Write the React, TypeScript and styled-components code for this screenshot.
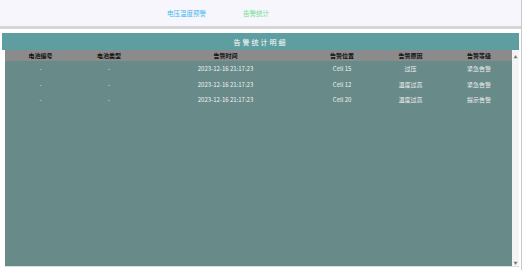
import React from "react";
import styled, { createGlobalStyle } from "styled-components";

type AlarmRow = {
  id: string;
  type: string;
  time: string;
  position: string;
  reason: string;
  level: string;
};

const GlobalStyle = createGlobalStyle`
  html, body {
    margin: 0;
    padding: 0;
    background: #fff;
    font-family: "Noto Sans CJK SC", "Noto Sans", sans-serif;
  }
`;

const Page = styled.div`
  width: 522px;
  height: 270px;
  box-sizing: border-box;
  border-right: 1px solid #c9c9c9;
  display: flex;
  flex-direction: column;
  overflow: hidden;
`;

const NavBar = styled.div`
  height: 26px;
  background: #f6f6fc;
  border-bottom: 3px solid #d6d6d6;
  display: flex;
  align-items: center;
  padding-left: 167px;
  gap: 37px;
`;

const NavItem = styled.span<{ $color: string }>`
  font-size: 6.5px;
  color: ${({ $color }) => $color};
  white-space: nowrap;
`;

const Panel = styled.div`
  flex: 1;
  margin: 4px 2px 3px 2px;
  display: flex;
  flex-direction: column;
  min-height: 0;
`;

const TitleBar = styled.div`
  height: 17px;
  background: #5f9ea0;
  color: #fff;
  font-size: 7px;
  letter-spacing: 2px;
  display: flex;
  align-items: center;
  justify-content: center;
`;

const Body = styled.div`
  flex: 1;
  display: flex;
  margin-left: 3px;
  border-bottom: 1px solid #cfe3e0;
  min-height: 0;
`;

const TableArea = styled.div`
  flex: 1;
  background: #688a88;
`;

const StyledTable = styled.table`
  width: 100%;
  table-layout: fixed;
  border-spacing: 0;
  white-space: nowrap;
`;

const HeadRow = styled.tr`
  background: #8b8b8b;
`;

const StyledTh = styled.th`
  height: 11px;
  padding: 0;
  font-size: 6px;
  font-weight: 700;
  color: #111;
  text-align: center;
`;

const StyledTd = styled.td`
  height: 15.5px;
  padding: 0;
  font-size: 6px;
  color: #f2f2f2;
  text-align: center;
`;

const Scrollbar = styled.div`
  width: 7px;
  background: #f4f4f4;
  display: flex;
  flex-direction: column;
  justify-content: space-between;
  align-items: center;
  padding: 5px 0 1px;
`;

const Arrow = styled.span`
  font-size: 4px;
  line-height: 4px;
  color: #777;
`;

const cols = [14, 13, 33, 13, 14, 13];

const cells = [
  { id: "id", label: "电池编号" },
  { id: "type", label: "电池类型" },
  { id: "time", label: "告警时间" },
  { id: "position", label: "告警位置" },
  { id: "reason", label: "告警原因" },
  { id: "level", label: "告警等级" },
];

const rows: AlarmRow[] = [
  { id: "-", type: "-", time: "2023-12-16 21:17:23", position: "Cell 15", reason: "过压", level: "紧急告警" },
  { id: "-", type: "-", time: "2023-12-16 21:17:23", position: "Cell 12", reason: "温度过高", level: "紧急告警" },
  { id: "-", type: "-", time: "2023-12-16 21:17:23", position: "Cell 20", reason: "温度过高", level: "提示告警" },
];

const App = () => {
  return (
    <>
      <GlobalStyle />
      <Page>
        <NavBar>
          <NavItem $color="#45b8ef">电压温度预警</NavItem>
          <NavItem $color="#6fe08e">告警统计</NavItem>
        </NavBar>
        <Panel>
          <TitleBar>告警统计明细</TitleBar>
          <Body>
            <TableArea>
              <StyledTable>
                <colgroup>
                  {cols.map((w, i) => (
                    <col key={i} style={{ width: `${w}%` }} />
                  ))}
                </colgroup>
                <thead>
                  <HeadRow>
                    {cells.map((cell) => (
                      <StyledTh key={cell.id}>{cell.label}</StyledTh>
                    ))}
                  </HeadRow>
                </thead>
                <tbody>
                  {rows.map((row, i) => (
                    <tr key={i}>
                      {cells.map((cell) => (
                        <StyledTd key={cell.id}>
                          {row[cell.id as keyof AlarmRow]}
                        </StyledTd>
                      ))}
                    </tr>
                  ))}
                </tbody>
              </StyledTable>
            </TableArea>
            <Scrollbar>
              <Arrow>▲</Arrow>
              <Arrow>▼</Arrow>
            </Scrollbar>
          </Body>
        </Panel>
      </Page>
    </>
  );
};

export default App;
